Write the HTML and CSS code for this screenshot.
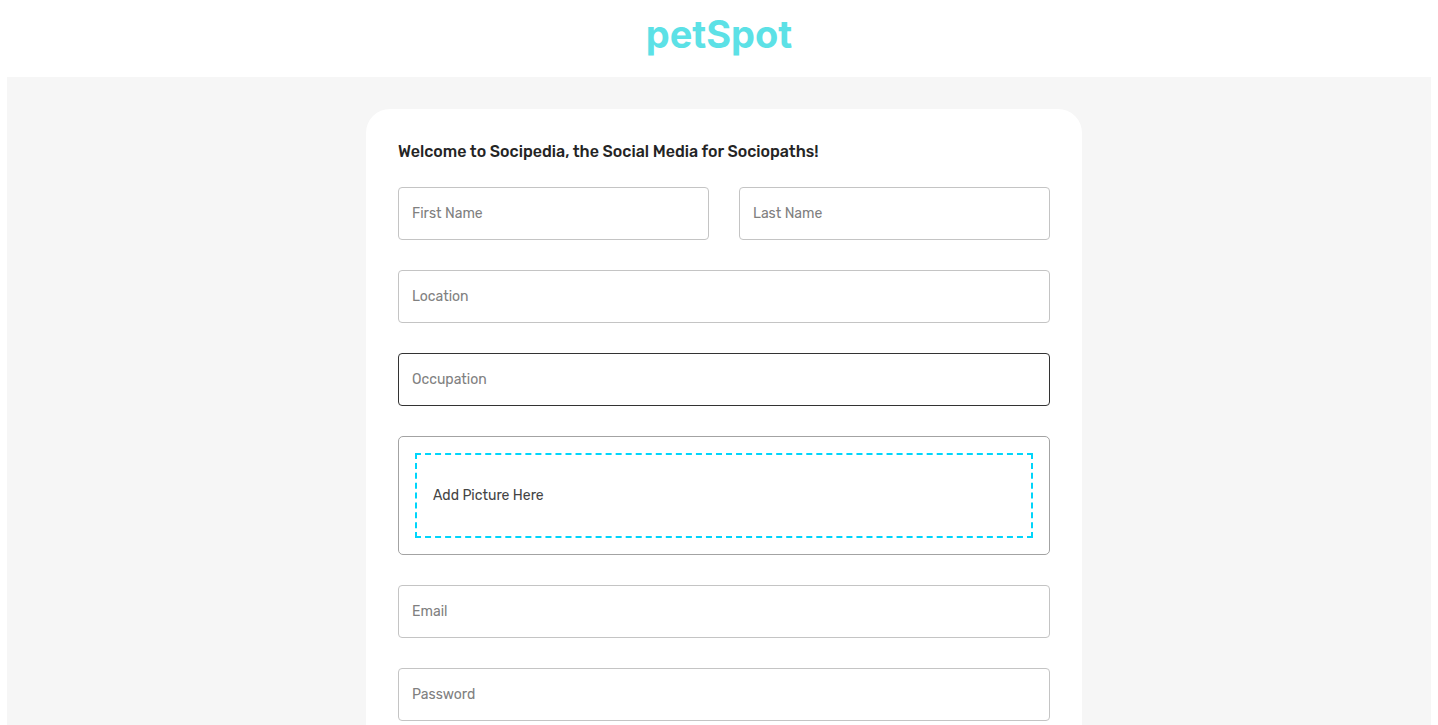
FILE: index.html
```html
<!DOCTYPE html>
<html lang="en">
<head>
<meta charset="utf-8">
<meta name="viewport" content="width=device-width, initial-scale=1">
<title>petSpot</title>
<link rel="stylesheet" href="styles.css">
</head>
<body>
<header class="site-header"><h1 class="brand">petSpot</h1></header>
<main class="page">
  <section class="card">
    <h2 class="welcome">Welcome to Socipedia, the Social Media for Sociopaths!</h2>
    <form class="form">
      <div class="row">
        <input class="field" type="text" placeholder="First Name" aria-label="First Name">
        <input class="field" type="text" placeholder="Last Name" aria-label="Last Name">
      </div>
      <input class="field" type="text" placeholder="Location" aria-label="Location">
      <input class="field field-active" type="text" placeholder="Occupation" aria-label="Occupation">
      <div class="upload">
        <label class="dropzone" for="picture">Add Picture Here</label>
        <input class="file-input" id="picture" type="file" accept="image/*" hidden>
      </div>
      <input class="field" type="email" placeholder="Email" aria-label="Email">
      <input class="field" type="password" placeholder="Password" aria-label="Password">
    </form>
  </section>
</main>
</body>
</html>
```
FILE: styles.css
```css
* { box-sizing: border-box; }

body {
  display: flex;
  flex-direction: column;
  height: 100vh;
  margin: 0;
  padding: 0 7px;
  overflow: hidden;
  background: #fff;
  color: #242424;
  font-family: Rubik, Roboto, "Liberation Sans", sans-serif;
}

.site-header {
  flex: none;
  padding: 10px 0 19px;
  text-align: center;
}

.brand {
  margin: 0;
  color: #5ce1e6;
  font-family: Inter, "Open Sans", sans-serif;
  font-size: 38px;
  font-weight: 700;
  line-height: 48px;
}

.page {
  flex: 1;
  min-height: 0;
  padding: 32px 0 0 10px;
  background: #f6f6f6;
}

.card {
  width: 716px;
  max-width: 100%;
  margin: 0 auto;
  padding: 32px;
  border-radius: 24px;
  background: #fff;
}

.welcome {
  margin: 0 0 24px;
  font-size: 16px;
  font-weight: 500;
  line-height: 22px;
}

.form {
  display: flex;
  flex-direction: column;
  gap: 30px;
}

.row {
  display: grid;
  grid-template-columns: 1fr 1fr;
  gap: 30px;
}

.field {
  width: 100%;
  height: 53px;
  padding: 0 13px;
  border: 1px solid #c4c4c4;
  border-radius: 4px;
  background: #fff;
  color: #444;
  font: 400 14px/20px Rubik, Roboto, "Liberation Sans", sans-serif;
}

.field::placeholder { color: #808080; opacity: 1; }

.field-active { border-color: #333; }

.upload {
  padding: 16px;
  border: 1px solid #a3a3a3;
  border-radius: 5px;
}

.dropzone {
  display: flex;
  align-items: center;
  height: 85px;
  padding: 0 16px;
  border: 2px dashed #00d5fa;
  color: #444;
  font-size: 14px;
  line-height: 20px;
  cursor: pointer;
}
```
